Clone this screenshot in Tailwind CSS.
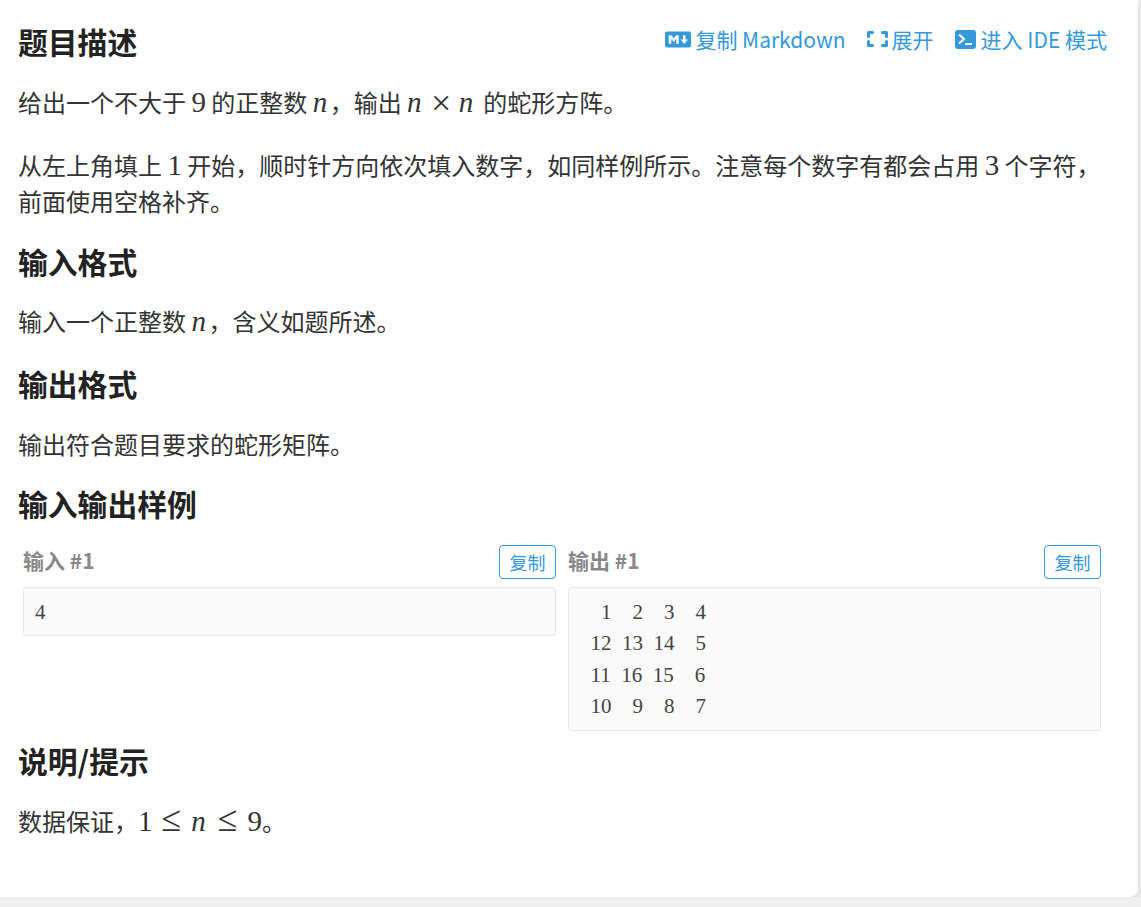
<!DOCTYPE html>
<html lang="zh-CN">
<head>
<meta charset="utf-8">
<script src="https://cdn.jsdelivr.net/npm/@tailwindcss/browser@4"></script>
</head>
<body class="bg-[#efefef] font-['Noto_Sans_CJK_SC','Noto_Sans',sans-serif] text-[#333] text-[24px] leading-[36px] overflow-hidden">
<main class="w-[1138px] h-[897px] bg-white rounded-br-[8px] shadow-[0_2px_6px_rgba(0,0,0,0.12)] pl-[18px] pr-[31px] pt-[19px]">
  <header class="flex justify-between items-start h-[44px] mb-[21px]">
    <h2 class="text-[29.8px] leading-[44px] font-bold text-[#222]">题目描述</h2>
    <nav class="flex items-center text-[21px] leading-[36px] text-[#3498db] mt-[2px]">
      <a class="flex items-center"><svg class="w-[26px] h-[21px] mr-[4px]" viewBox="0 0 640 512" fill="currentColor"><path d="M593.8 59.9H46.2C20.7 59.9 0 80.6 0 106v299.9C0 431.4 20.7 452 46.2 452h547.7c25.5 0 46.2-20.7 46.1-46.1V106.1c0-25.5-20.7-46.2-46.2-46.2zM338.5 360.6H277v-120l-61.5 76.9-61.5-76.9v120H92.3V151.4h61.5l61.5 76.9 61.5-76.9h61.5v209.2zm135.3 3.1L381.5 256H443V151.4h61.5V256H566z"/></svg>复制 Markdown</a>
      <a class="flex items-center ml-[21px]"><svg class="w-[21px] h-[16px] mr-[4px]" viewBox="0 0 21 16" fill="none" stroke="currentColor" stroke-width="3" stroke-linejoin="round" stroke-linecap="round"><path d="M5.5 1.5H1.5V5.5M15.5 1.5h4V5.5M5.5 14.5H1.5V10.5M15.5 14.5h4V10.5"/></svg>展开</a>
      <a class="flex items-center ml-[21px]"><svg class="w-[21px] h-[19px] mr-[5px]" viewBox="0 0 21 19"><rect width="21" height="19" rx="3" fill="currentColor"/><path d="M4 4.5l5 4.5-5 4.5" fill="none" stroke="#fff" stroke-width="2"/><path d="M10 14h7" stroke="#fff" stroke-width="2"/></svg>进入 IDE 模式</a>
    </nav>
  </header>
  <p class="mb-[27px]">给出一个不大于 <span class="font-['Liberation_Serif',serif] text-[29px]">9</span> 的正整数 <i class="font-['Liberation_Serif',serif] text-[29px] pr-[2.5px]">n</i>，输出 <i class="font-['Liberation_Serif',serif] text-[29px] pr-[7.5px]">n</i><span class="relative top-[3px] font-['Liberation_Serif',serif] text-[36px] leading-[0] mx-[2px]">×</span><i class="font-['Liberation_Serif',serif] text-[29px] pl-[5.5px] pr-[4.5px]">n</i> 的蛇形方阵。</p>
  <p>从左上角填上 <span class="font-['Liberation_Serif',serif] text-[29px]">1</span> 开始，顺时针方向依次填入数字，如同样例所示。注意每个数字有都会占用 <span class="font-['Liberation_Serif',serif] text-[29px]">3</span> 个字符，前面使用空格补齐。</p>
  <h2 class="text-[29.8px] leading-[44px] font-bold text-[#222] mt-[20px] mb-[20px]">输入格式</h2>
  <p>输入一个正整数 <i class="font-['Liberation_Serif',serif] text-[29px] pr-[2.5px]">n</i>，含义如题所述。</p>
  <h2 class="text-[29.8px] leading-[44px] font-bold text-[#222] mt-[22px] mb-[21px]">输出格式</h2>
  <p>输出符合题目要求的蛇形矩阵。</p>
  <h2 class="text-[29.8px] leading-[44px] font-bold text-[#222] mt-[19px] mb-[20px]">输入输出样例</h2>
  <section class="flex gap-[12px] pl-[5px] pr-[3px]">
    <div class="w-[533px]">
      <div class="flex justify-between items-center h-[34px] mb-[8px]">
        <h3 class="text-[21px] font-bold text-[#888] pb-[4px]">输入 #1</h3>
        <button class="w-[57px] h-[34px] border border-[#3498db] rounded-[4px] text-[18px] leading-[32px] text-[#3498db]">复制</button>
      </div>
      <pre class="bg-[#fafafa] border border-[#e8e8e8] rounded-[3px] px-[11px] pt-[9px] pb-[7px] font-['Liberation_Serif',serif] text-[21px] leading-[31.4px] text-[#444]">4</pre>
    </div>
    <div class="w-[533px]">
      <div class="flex justify-between items-center h-[34px] mb-[8px]">
        <h3 class="text-[21px] font-bold text-[#888] pb-[4px]">输出 #1</h3>
        <button class="w-[57px] h-[34px] border border-[#3498db] rounded-[4px] text-[18px] leading-[32px] text-[#3498db]">复制</button>
      </div>
      <pre class="bg-[#fafafa] border border-[#e8e8e8] rounded-[3px] px-[11px] pt-[9px] pb-[7px] font-['Liberation_Serif',serif] text-[21px] leading-[31.4px] text-[#444]">&#8199;&#8199;1&#8199;&#8199;2&#8199;&#8199;3&#8199;&#8199;4
&#8199;12&#8199;13&#8199;14&#8199;&#8199;5
&#8199;11&#8199;16&#8199;15&#8199;&#8199;6
&#8199;10&#8199;&#8199;9&#8199;&#8199;8&#8199;&#8199;7</pre>
    </div>
  </section>
  <h2 class="text-[29.8px] leading-[44px] font-bold text-[#222] mt-[7px] mb-[21px]">说明/提示</h2>
  <p>数据保证，<span class="font-['Liberation_Serif',serif] text-[29px]">1<span class="text-[36px] leading-[0] mx-[9px]">≤</span><i class="pl-[1px] pr-[3px]">n</i><span class="text-[36px] leading-[0] ml-[9px] mr-[10px]">≤</span>9</span>。</p>
</main>
</body>
</html>
